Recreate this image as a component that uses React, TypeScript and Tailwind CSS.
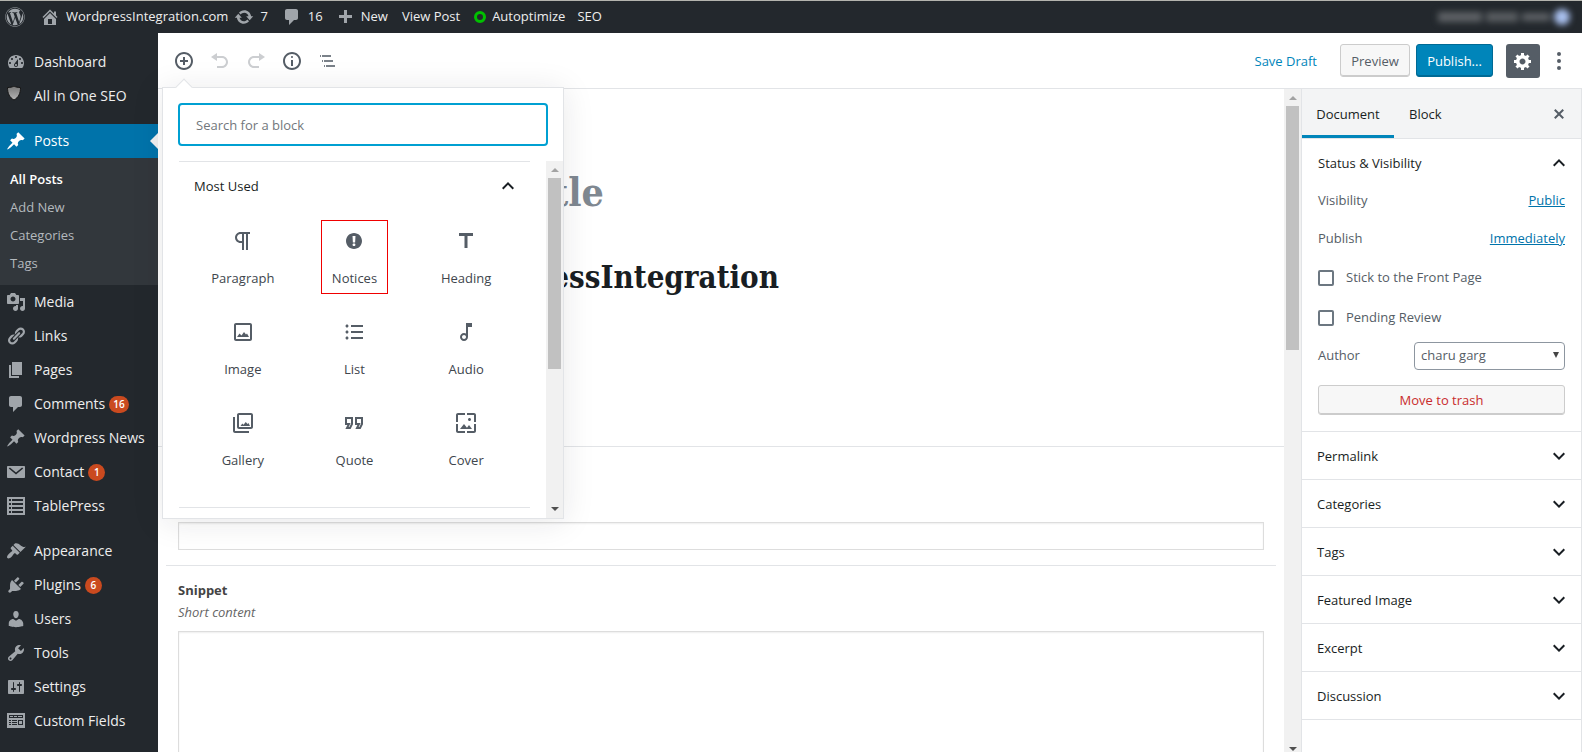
import React from 'react';
import { FaWordpress } from 'react-icons/fa';

interface IconProps {
  d: string;
  size?: 20 | 24;
  className?: string;
}

const Icon: React.FC<IconProps> = ({ d, size = 20, className = '' }) => (
  <svg
    width={size}
    height={size}
    viewBox={size === 24 ? '0 0 24 24' : '0 0 20 20'}
    fill="currentColor"
    fillRule="evenodd"
    aria-hidden="true"
    className={`shrink-0 ${className}`}
  >
    <path d={d} />
  </svg>
);

const icons = {
  dashboard:
    'M3.76 16h12.48c1.1-1.37 1.76-3.11 1.76-5 0-4.42-3.58-8-8-8s-8 3.58-8 8c0 1.89.66 3.63 1.76 5zM10 4c.55 0 1 .45 1 1s-.45 1-1 1-1-.45-1-1 .45-1 1-1zM6 6c.55 0 1 .45 1 1s-.45 1-1 1-1-.45-1-1 .45-1 1-1zm8 0c.55 0 1 .45 1 1s-.45 1-1 1-1-.45-1-1 .45-1 1-1zm-5.37 5.55L12 7v6c0 1.1-.9 2-2 2s-2-.9-2-2c0-.57.24-1.08.63-1.45zM4 10c.55 0 1 .45 1 1s-.45 1-1 1-1-.45-1-1 .45-1 1-1zm12 0c.55 0 1 .45 1 1s-.45 1-1 1-1-.45-1-1 .45-1 1-1zm-5 3c0-.55-.45-1-1-1s-1 .45-1 1 .45 1 1 1 1-.45 1-1z',
  post: 'M10.44 3.02l1.82-1.82 6.36 6.35-1.83 1.82c-1.05-.68-2.48-.57-3.41.36l-.75.75c-.92.93-1.04 2.35-.35 3.41l-1.83 1.82-2.41-2.41-2.8 2.79c-.42.42-3.38 2.71-3.8 2.29s1.86-3.39 2.28-3.81l2.79-2.79L4.1 9.36l1.83-1.82c1.05.69 2.48.57 3.4-.36l.75-.75c.93-.92 1.05-2.35.36-3.41z',
  media:
    'M13 11V4c0-.55-.45-1-1-1h-1.67L9 1H5L3.67 3H2c-.55 0-1 .45-1 1v7c0 .55.45 1 1 1h10c.55 0 1-.45 1-1zM7 4.5c1.38 0 2.5 1.12 2.5 2.5S8.38 9.5 7 9.5 4.5 8.38 4.5 7 5.62 4.5 7 4.5zM14 6h5v10.5c0 1.38-1.12 2.5-2.5 2.5S14 17.88 14 16.5s1.12-2.5 2.5-2.5c.17 0 .34.02.5.05V9h-3V6zm-4 8.05V13h2v3.5c0 1.38-1.12 2.5-2.5 2.5S7 17.88 7 16.5 8.12 14 9.5 14c.17 0 .34.02.5.05z',
  links:
    'M17.74 2.76c1.68 1.69 1.68 4.41 0 6.1l-1.53 1.52c-1.12 1.12-2.7 1.47-4.14 1.09l2.62-2.61.76-.77.76-.76c.84-.84.84-2.2 0-3.04-.84-.85-2.2-.85-3.04 0l-.77.76-3.38 3.38c-.37-1.44-.02-3.02 1.1-4.14l1.52-1.53c1.69-1.68 4.42-1.68 6.1 0zM8.59 13.43l5.34-5.34c.42-.42.42-1.1 0-1.52-.44-.43-1.13-.39-1.53 0l-5.33 5.34c-.42.42-.42 1.1 0 1.52.44.43 1.13.39 1.52 0zm-.76 2.29l4.14-4.15c.38 1.44.03 3.02-1.09 4.14l-1.52 1.53c-1.69 1.68-4.41 1.68-6.1 0-1.68-1.68-1.68-4.42 0-6.1l1.53-1.52c1.12-1.12 2.7-1.47 4.14-1.1l-4.14 4.15c-.85.84-.85 2.2 0 3.05.84.84 2.2.84 3.04 0z',
  page: 'M6 15V2h10v13H6zm-1 1h8v2H3V5h2v11z',
  comments:
    'M5 2h9c1.1 0 2 .9 2 2v7c0 1.1-.9 2-2 2h-2l-5 5v-5H5c-1.1 0-2-.9-2-2V4c0-1.1.9-2 2-2z',
  mail: 'M2 4h16c.55 0 1 .45 1 1v10c0 .55-.45 1-1 1H2c-.55 0-1-.45-1-1V5c0-.55.45-1 1-1zm1.9 1.4L2.8 6.6l7.2 6 7.2-6-1.1-1.2L10 10.6z',
  table:
    'M1 1h18v18H1V1zm2 2v2h2V3H3zm3 0v2h11V3H6zM3 7v2h2V7H3zm3 0v2h11V7H6zm-3 4v2h2v-2H3zm3 0v2h11v-2H6zm-3 4v2h2v-2H3zm3 0v2h11v-2H6z',
  appearance:
    'M14.48 11.06L7.41 3.99l1.5-1.5c.5-.56 2.3-.47 3.51.32 1.21.8 1.43 1.28 2.91 2.1 1.18.64 2.45 1.26 4.45.85zm-.71.71L6.7 4.7 4.93 6.47c-.39.39-.39 1.02 0 1.41l1.06 1.06c.39.39.39 1.03 0 1.42-.6.6-1.43 1.11-2.21 1.69-.35.26-.7.53-1.01.84C1.43 14.23.4 16.08 1.4 17.07c.99 1 2.84-.03 4.18-1.36.31-.31.58-.66.85-1.02.57-.78 1.08-1.61 1.69-2.21.39-.39 1.02-.39 1.41 0l1.06 1.06c.39.39 1.02.39 1.41 0z',
  plugins:
    'M13.11 4.36L9.87 7.6 8 5.73l3.24-3.24c.35-.34 1.05-.2 1.56.32.52.51.66 1.21.31 1.55zm-8 1.77l.91-1.12 9.01 9.01-1.19.84c-.71.71-2.63 1.16-3.82 1.16H6.14L4.9 17.26c-.59.59-1.54.59-2.12 0-.59-.58-.59-1.53 0-2.12l1.24-1.24v-3.88c0-1.13.4-3.19 1.09-3.89zm7.26 3.97l3.24-3.24c.34-.35 1.04-.21 1.55.31.52.51.66 1.21.31 1.55l-3.24 3.25z',
  users:
    'M10 9.25c-2.27 0-2.73-3.44-2.73-3.44C7 4.02 7.82 2 9.97 2c2.16 0 2.98 2.02 2.71 3.81 0 0-.41 3.44-2.68 3.44zm0 2.57L12.72 10c2.39 0 4.52 2.33 4.52 4.53v2.49s-3.65 1.13-7.24 1.13c-3.65 0-7.24-1.13-7.24-1.13v-2.49c0-2.25 1.94-4.48 4.47-4.48z',
  tools:
    'M16.68 9.77c-1.34 1.34-3.3 1.67-4.95.99l-5.41 6.52c-.99.99-2.59.99-3.58 0s-.99-2.59 0-3.57l6.52-5.42c-.68-1.65-.35-3.61.99-4.95 1.28-1.28 3.12-1.62 4.72-1.06l-2.89 2.89 2.82 2.82 2.86-2.87c.53 1.58.18 3.39-1.08 4.65zM3.81 16.21c.4.39 1.04.39 1.43 0 .4-.4.4-1.04 0-1.43-.39-.4-1.03-.4-1.43 0-.39.39-.39 1.03 0 1.43z',
  settings:
    'M18 16V4c0-.55-.45-1-1-1H3c-.55 0-1 .45-1 1v12c0 .55.45 1 1 1h14c.55 0 1-.45 1-1zM8 11h1c.55 0 1 .45 1 1s-.45 1-1 1H8v1.5c0 .28-.22.5-.5.5s-.5-.22-.5-.5V13H6c-.55 0-1-.45-1-1s.45-1 1-1h1V5.5c0-.28.22-.5.5-.5s.5.22.5.5V11zm5-2h-1c-.55 0-1-.45-1-1s.45-1 1-1h1V5.5c0-.28.22-.5.5-.5s.5.22.5.5V7h1c.55 0 1 .45 1 1s-.45 1-1 1h-1v5.5c0 .28-.22.5-.5.5s-.5-.22-.5-.5V9z',
  fields:
    'M1 2h18v15H1V2zm2 2v3h14V4H3zm1 1h3v1H4V5zm4 0h3v1H8V5zm4 0h4v1h-4V5zM3 9v1h2V9H3zm3 0v1h5V9H6zm-3 2v1h2v-1H3zm3 0v1h5v-1H6zm-3 2v1h2v-1H3zm3 0v1h5v-1H6zm6-4v5h5V9h-5zm1 1h3v3h-3v-3z',
  home: 'M16 8.5l1.53 1.53-1.06 1.06L10 4.6l-6.47 6.49-1.06-1.06L10 2.5l4 4v-2h2v4zm-6-2.46l6 5.99V18H4v-5.97zM12 17v-5H8v5h4z',
  update:
    'M10.2 3.28c3.53 0 6.43 2.61 6.92 6h2.08l-3.5 4-3.5-4h2.32c-.45-1.97-2.21-3.45-4.32-3.45-1.45 0-2.73.71-3.54 1.78L4.95 5.66C6.23 4.2 8.11 3.28 10.2 3.28zm-.4 13.44c-3.52 0-6.43-2.61-6.92-6H.8l3.5-4c1.17 1.33 2.33 2.67 3.5 4H5.48c.45 1.97 2.21 3.45 4.32 3.45 1.45 0 2.73-.71 3.54-1.78l1.71 1.95c-1.28 1.46-3.15 2.38-5.25 2.38z',
  plus: 'M17 8v3h-5v5H9v-5H4V8h5V3h3v5h5z',
  insert:
    'M10 1c-5 0-9 4-9 9s4 9 9 9 9-4 9-9-4-9-9-9zm0 16c-3.9 0-7-3.1-7-7s3.1-7 7-7 7 3.1 7 7-3.1 7-7 7zm1-11H9v3H6v2h3v3h2v-3h3V9h-3V6z',
  undo: 'M12 5H7V2L1 6l6 4V7h5c2.2 0 4 1.8 4 4s-1.8 4-4 4H7v2h5c3.3 0 6-2.7 6-6s-2.7-6-6-6z',
  redo: 'M8 5h5V2l6 4-6 4V7H8c-2.2 0-4 1.8-4 4s1.8 4 4 4h5v2H8c-3.3 0-6-2.7-6-6s2.7-6 6-6z',
  info: 'M9 15h2V9H9v6zm1-10c-.5 0-1 .5-1 1s.5 1 1 1 1-.5 1-1-.5-1-1-1zm0-4c-5 0-9 4-9 9s4 9 9 9 9-4 9-9-4-9-9-9zm0 16c-3.9 0-7-3.1-7-7s3.1-7 7-7 7 3.1 7 7-3.1 7-7 7z',
  outline:
    'M2 4h1v2H2V4zm2 0h9v2H4V4zm0 5h1v2H4V9zm2 0h9v2H6V9zm0 5h1v2H6v-2zm2 0h9v2H8v-2z',
  gear: 'M18 12h-2.18c-.17.7-.44 1.35-.81 1.93l1.54 1.54-2.1 2.1-1.54-1.54c-.58.36-1.23.63-1.91.79V19H8v-2.18c-.68-.16-1.33-.43-1.91-.79l-1.54 1.54-2.12-2.12 1.54-1.54c-.36-.58-.63-1.23-.79-1.91H1V9.03h2.17c.16-.7.44-1.35.8-1.94L2.43 5.55l2.1-2.1 1.54 1.54c.58-.37 1.24-.64 1.93-.81V2h3v2.18c.68.16 1.33.43 1.91.79l1.54-1.54 2.12 2.12-1.54 1.54c.36.59.64 1.24.8 1.94H18V12zm-8.5 1.5c1.66 0 3-1.34 3-3s-1.34-3-3-3-3 1.34-3 3 1.34 3 3 3z',
  more: 'M10 1a2 2 0 110 4 2 2 0 010-4zm0 7a2 2 0 110 4 2 2 0 010-4zm0 7a2 2 0 110 4 2 2 0 010-4z',
  close:
    'M14.95 6.46L11.41 10l3.54 3.54-1.41 1.41L10 11.42l-3.53 3.53-1.42-1.42L8.58 10 5.05 6.47l1.42-1.42L10 8.58l3.54-3.53z',
  up: 'M12 8l-6 6 1.41 1.41L12 10.83l4.59 4.58L18 14z',
  down: 'M7.41 8.59L12 13.17l4.59-4.58L18 10l-6 6-6-6z',
};

const blocks: { label: string; d: string; size: 20 | 24; marked?: boolean }[] = [
  { label: 'Paragraph', size: 24, d: 'M11 5v7H9.5C7.6 12 6 10.4 6 8.5S7.6 5 9.5 5H11m8-2H9.5C6.5 3 4 5.5 4 8.5S6.5 14 9.5 14H11v7h2V5h2v16h2V5h2V3z' },
  { label: 'Notices', size: 20, marked: true, d: 'M10 2c4.42 0 8 3.58 8 8s-3.58 8-8 8-8-3.58-8-8 3.58-8 8-8zm1.13 9.38l.35-6.46H8.52l.35 6.46h2.26zm-.09 3.36c.24-.23.37-.55.37-.96 0-.42-.12-.74-.36-.97s-.59-.35-1.06-.35-.82.12-1.07.35-.37.55-.37.97c0 .41.13.73.38.96.26.23.61.34 1.06.34s.8-.11 1.05-.34z' },
  { label: 'Heading', size: 24, d: 'M5 4v3h5.5v12h3V7H19V4z' },
  { label: 'Image', size: 24, d: 'M19 5v14H5V5h14m0-2H5c-1.1 0-2 .9-2 2v14c0 1.1.9 2 2 2h14c1.1 0 2-.9 2-2V5c0-1.1-.9-2-2-2zM6 17l2.5-3.5 2 2 2.5-3.5 2 2.5 1-1 2 3.5z' },
  { label: 'List', size: 24, d: 'M9 19h12v-2H9v2zm0-6h12v-2H9v2zm0-8v2h12V5H9zm-4-.5c-.83 0-1.5.67-1.5 1.5S4.17 7.5 5 7.5 6.5 6.83 6.5 6 5.83 4.5 5 4.5zm0 6c-.83 0-1.5.67-1.5 1.5s.67 1.5 1.5 1.5 1.5-.67 1.5-1.5-.67-1.5-1.5-1.5zm0 6c-.83 0-1.5.67-1.5 1.5s.67 1.5 1.5 1.5 1.5-.67 1.5-1.5-.67-1.5-1.5-1.5z' },
  { label: 'Audio', size: 24, d: 'M12 3l.01 10.55c-.59-.34-1.27-.55-2-.55C7.79 13 6 14.79 6 17s1.79 4 4.01 4S14 19.21 14 17V7h4V3h-6zm-1.99 16c-1.1 0-2-.9-2-2s.9-2 2-2 2 .9 2 2-.9 2-2 2z' },
  { label: 'Gallery', size: 24, d: 'M20 4v12H8V4h12m0-2H8C6.9 2 6 2.9 6 4v12c0 1.1.9 2 2 2h12c1.1 0 2-.9 2-2V4c0-1.1-.9-2-2-2zM9.5 15l1.8-2.5 1.2 1.2 2.3-2.7 1.7 2 1-1 1.5 3zM2 6v14c0 1.1.9 2 2 2h14v-2H4V6H2z' },
  { label: 'Quote', size: 24, d: 'M18.62 18h-5.24l2-4H13V6h8v7.24L18.62 18zm-2-2h.76L19 12.76V8h-4v4h3.62l-2 4zm-8 2H3.38l2-4H3V6h8v7.24L8.62 18zm-2-2h.76L9 12.76V8H5v4h3.62l-2 4z' },
  { label: 'Cover', size: 24, d: 'M4 4h7V2H4c-1.1 0-2 .9-2 2v7h2V4zm6 9l-4 5h12l-3-4-2.03 2.71L10 13zm7-4.5c0-.83-.67-1.5-1.5-1.5S14 7.67 14 8.5s.67 1.5 1.5 1.5S17 9.33 17 8.5zM20 2h-7v2h7v7h2V4c0-1.1-.9-2-2-2zm0 18h-7v2h7c1.1 0 2-.9 2-2v-7h-2v7zM4 13H2v7c0 1.1.9 2 2 2h7v-2H4v-7z' },
];

interface MenuItemProps {
  label: string;
  d?: string;
  count?: number;
  active?: boolean;
}

const MenuItem: React.FC<MenuItemProps> = ({ label, d, count, active }) => (
  <a
    href="#"
    className={`relative flex h-[34px] items-center pl-1.5 text-sm ${active ? 'bg-[#0073aa] text-white' : 'text-[#eee]'}`}
  >
    {d ? (
      <Icon d={d} className={active ? 'text-white' : 'text-[#a0a5aa]'} />
    ) : (
      <svg width="20" height="20" viewBox="0 0 20 20" aria-hidden="true" className="shrink-0">
        <defs>
          <linearGradient id="shield" x1="0" y1="0" x2="0" y2="1">
            <stop offset="0" stopColor="#777" />
            <stop offset="1" stopColor="#b5b5b5" />
          </linearGradient>
        </defs>
        <path d="M8 0c2 1.200 4 1.500 6.500 1.500 0 6-2 10-6.500 12.500C3.500 11.500 1.500 7.500 1.500 1.500 4 1.500 6 1.200 8 0z" fill="url(#shield)" stroke="#151515" />
      </svg>
    )}
    <span className="ml-2 whitespace-nowrap">{label}</span>
    {count !== undefined && (
      <span className="ml-1 flex h-[17px] min-w-[17px] items-center justify-center rounded-full bg-[#ca4a1f] px-1 text-[10px] font-semibold text-white">
        {count}
      </span>
    )}
    {active && (
      <span className="absolute right-0 border-y-8 border-r-8 border-y-transparent border-r-[#f1f1f1]" />
    )}
  </a>
);

const AdminMenu = () => (
  <nav aria-label="Admin menu" className="w-[158px] shrink-0 overflow-hidden bg-[#23282d] pt-3">
    <MenuItem label="Dashboard" d={icons.dashboard} />
    <MenuItem label="All in One SEO" />
    <div className="mt-[11px]">
      <MenuItem label="Posts" d={icons.post} active />
      <ul className="bg-[#32373c] pt-[7px] pb-2 text-[13px] leading-7 text-[#b4b9be]">
        <li><a href="#" className="block pl-2.5 font-semibold text-white">All Posts</a></li>
        <li><a href="#" className="block pl-2.5">Add New</a></li>
        <li><a href="#" className="block pl-2.5">Categories</a></li>
        <li><a href="#" className="block pl-2.5">Tags</a></li>
      </ul>
    </div>
    <MenuItem label="Media" d={icons.media} />
    <MenuItem label="Links" d={icons.links} />
    <MenuItem label="Pages" d={icons.page} />
    <MenuItem label="Comments" d={icons.comments} count={16} />
    <MenuItem label="Wordpress News" d={icons.post} />
    <MenuItem label="Contact" d={icons.mail} count={1} />
    <MenuItem label="TablePress" d={icons.table} />
    <div className="mt-[11px]">
      <MenuItem label="Appearance" d={icons.appearance} />
      <MenuItem label="Plugins" d={icons.plugins} count={6} />
      <MenuItem label="Users" d={icons.users} />
      <MenuItem label="Tools" d={icons.tools} />
      <MenuItem label="Settings" d={icons.settings} />
      <MenuItem label="Custom Fields" d={icons.fields} />
    </div>
  </nav>
);

const AdminBar = () => (
  <header className="flex h-[33px] shrink-0 items-center border-t border-[#b4b4ae] bg-[#23282d] pr-3 pl-[5px] text-[13px] whitespace-nowrap text-[#eee]">
    <a href="#" aria-label="WordPress"><FaWordpress size={20} className="text-[#a0a5aa]" /></a>
    <a href="#" className="ml-[15px] flex items-center gap-1.5">
      <Icon d={icons.home} className="text-[#a0a5aa]" />WordpressIntegration.com
    </a>
    <a href="#" className="ml-1.5 flex items-center gap-1.5">
      <Icon d={icons.update} className="text-[#a0a5aa]" />7
    </a>
    <a href="#" className="ml-3.5 flex items-center gap-1.5">
      <Icon d={icons.comments} className="text-[#a0a5aa]" />16
    </a>
    <a href="#" className="ml-3 flex items-center gap-1.5">
      <Icon d={icons.plus} className="text-[#a0a5aa]" />New
    </a>
    <a href="#" className="ml-3.5">View Post</a>
    <a href="#" className="ml-3.5 flex items-center gap-1.5">
      <span className="size-3 rounded-full border-[3px] border-[#00c000]" />Autoptimize
    </a>
    <a href="#" className="ml-3">SEO</a>
    <div className="ml-auto flex items-center gap-1 blur-[3px]" aria-hidden="true">
      <span className="h-2.5 w-11 bg-[#5d6165]" />
      <span className="h-2.5 w-8 bg-[#585c60]" />
      <span className="h-2 w-7 bg-[#5d6165]" />
      <span className="size-4 rounded-full bg-[#a9c0ee]" />
    </div>
  </header>
);

interface ScrollBarProps {
  thumb: string;
  end: string;
}

const ScrollBar: React.FC<ScrollBarProps> = ({ thumb, end }) => (
  <div className="flex w-[17px] shrink-0 flex-col items-center bg-[#f1f1f1]" aria-hidden="true">
    <span className="mt-[7px] mb-[6px] border-x-4 border-b-4 border-x-transparent border-b-[#a3a3a3]" />
    <span className={`w-[13px] bg-[#c1c1c1] ${thumb}`} />
    <span className={`mt-auto border-x-4 border-t-4 border-x-transparent border-t-[#505050] ${end}`} />
  </div>
);

const BlockInserter = () => (
  <div className="absolute top-[54px] left-1 z-10 flex h-[432px] w-[402px] flex-col border border-[#e2e4e7] bg-white shadow-[0_3px_30px_rgba(25,30,35,0.1)]">
    <span className="absolute -top-[7px] left-[15px] size-3 rotate-45 border-t border-l border-[#e2e4e7] bg-white" />
    <div className="p-[15px]">
      <input
        type="text"
        aria-label="Search for a block"
        placeholder="Search for a block"
        className="h-[43px] w-full rounded border-2 border-[#00a0d2] px-4 text-[13px] outline-none placeholder:text-[#72777c]"
      />
    </div>
    <div className="flex min-h-0 flex-1">
      <div className="min-w-0 flex-1 overflow-hidden pr-4 pl-4">
        <section className="border-y border-[#e2e4e7] pb-[31px]">
          <button type="button" className="flex h-12 w-full items-center justify-between pr-2.5 pl-[15px] text-[13px] text-[#191e23]">
            <span className="pt-0.5">Most Used</span>
            <Icon d={icons.up} size={24} />
          </button>
          <div className="grid grid-cols-3 gap-y-[17px] px-2 pt-2.5">
            {blocks.map((block) => (
              <button
                key={block.label}
                type="button"
                className={`flex h-[74px] flex-col items-center justify-self-center border px-2.5 pt-2 text-[13px] leading-[18px] text-[#40464d] ${block.marked ? 'border-[#f00000]' : 'border-transparent'}`}
              >
                <span className="mb-4 flex size-6 items-center justify-center text-[#555d66]">
                  <Icon d={block.d} size={block.size} />
                </span>
                {block.label}
              </button>
            ))}
          </div>
        </section>
      </div>
      <ScrollBar thumb="h-[191px]" end="mb-[7px]" />
    </div>
  </div>
);

const Toolbar = () => (
  <div className="flex h-14 shrink-0 items-center border-b border-[#e2e4e7] bg-white pr-[13px] text-[13px]">
    <div className="flex items-center gap-4 pl-4 text-[#555d66]">
      <button type="button" aria-label="Add block"><Icon d={icons.insert} /></button>
      <button type="button" aria-label="Undo" className="text-[#ccced1]"><Icon d={icons.undo} /></button>
      <button type="button" aria-label="Redo" className="text-[#ccced1]"><Icon d={icons.redo} /></button>
      <button type="button" aria-label="Content structure"><Icon d={icons.info} /></button>
      <button type="button" aria-label="Block navigation" className="text-[#7a8189]"><Icon d={icons.outline} /></button>
    </div>
    <div className="ml-auto flex items-center">
      <button type="button" className="mr-[23px] pt-0.5 text-[#0085ba]">Save Draft</button>
      <button type="button" className="mr-1.5 h-[33px] w-[70px] rounded-[3px] border border-[#ccc] bg-[#f7f7f7] pt-0.5 text-[#555d66] shadow-[inset_0_-1px_0_#ccc]">
        Preview
      </button>
      <button type="button" className="mr-[13px] h-[33px] w-[77px] rounded-[3px] border border-[#006a95] bg-[#0085ba] pt-0.5 font-medium text-white shadow-[inset_0_-1px_0_#006a95]">
        Publish...
      </button>
      <button type="button" aria-label="Settings" className="mr-[9px] flex size-[34px] items-center justify-center rounded-[3px] bg-[#555d66] text-white">
        <Icon d={icons.gear} />
      </button>
      <button type="button" aria-label="More tools" className="text-[#555d66]"><Icon d={icons.more} /></button>
    </div>
  </div>
);

const EditorContent = () => (
  <main className="flex min-w-0 flex-1 flex-col overflow-hidden bg-white">
    <div className="h-[358px] shrink-0 border-b border-[#e2e4e7] pt-[76px]">
      <div className="mx-auto w-[574px] font-['DejaVu_Serif_Condensed','DejaVu_Serif',serif] font-bold">
        <h1 className="text-[39px] leading-[54px] text-[#7f8891]">Add title</h1>
        <h2 className="mt-9 text-[31px] leading-[44px] text-[#191e23]">WordPressIntegration</h2>
      </div>
    </div>
    <div className="px-2">
      <div className="border-b border-[#e2e4e7] px-3 pt-[75px] pb-[15px]">
        <input type="text" aria-label="Custom field" className="block h-7 w-full border border-[#ddd] px-2 text-[13px] shadow-[inset_0_1px_2px_rgba(0,0,0,0.07)] outline-none" />
      </div>
      <div className="px-3 pt-[15px] text-[13px] leading-[18px]">
        <label htmlFor="snippet" className="block font-bold text-[#444]">Snippet</label>
        <p className="mt-1 mb-2.5 text-[#666] italic">Short content</p>
        <textarea id="snippet" className="block h-[200px] w-full resize-none border border-[#ddd] p-2 shadow-[inset_0_1px_2px_rgba(0,0,0,0.07)] outline-none" />
      </div>
    </div>
  </main>
);

const DocumentSettings = () => (
  <aside className="w-[281px] shrink-0 overflow-hidden border-x border-[#e2e4e7] bg-white text-[13px] text-[#191e23]">
    <div className="flex h-[50px] items-stretch border-b border-[#e2e4e7] bg-[#f3f4f5] pr-3">
      <button type="button" className="w-[92px] border-b-3 border-[#0085ba] pt-[5px]">Document</button>
      <button type="button" className="px-[15px] pt-0.5">Block</button>
      <button type="button" aria-label="Close settings" className="ml-auto text-[#555d66]"><Icon d={icons.close} /></button>
    </div>
    <section className="border-b border-[#e2e4e7] px-4 pb-4 text-[#555d66]">
      <button type="button" className="-mr-2 flex h-12 w-[calc(100%+6px)] items-center justify-between text-[#191e23]">
        <span className="pt-0.5">Status &amp; Visibility</span>
        <Icon d={icons.up} size={24} />
      </button>
      <div className="flex h-[27px] items-center justify-between">
        <span>Visibility</span>
        <a href="#" className="text-[#0073aa] underline">Public</a>
      </div>
      <div className="mt-[11px] flex h-[27px] items-center justify-between">
        <span>Publish</span>
        <a href="#" className="text-[#0073aa] underline">Immediately</a>
      </div>
      <label className="mt-3 flex h-[27px] items-center gap-3">
        <input type="checkbox" className="size-4 appearance-none rounded-[2px] border-2 border-[#6c7781]" />
        Stick to the Front Page
      </label>
      <label className="mt-[13px] flex h-[27px] items-center gap-3">
        <input type="checkbox" className="size-4 appearance-none rounded-[2px] border-2 border-[#6c7781]" />
        Pending Review
      </label>
      <div className="mt-[11px] flex items-center justify-between">
        <label htmlFor="author">Author</label>
        <div className="relative">
          <select id="author" className="h-7 w-[151px] appearance-none rounded border border-[#8d96a0] bg-white pl-1.5">
            <option>charu garg</option>
          </select>
          <span className="pointer-events-none absolute top-[10px] right-1.5 border-x-[3px] border-t-[6px] border-x-transparent border-t-[#444]" />
        </div>
      </div>
      <button type="button" className="mt-[15px] h-[30px] w-full rounded-[3px] border border-[#ccc] bg-[#f7f7f7] pt-0.5 text-[#c92c2c] shadow-[inset_0_-1px_0_#ccc]">
        Move to trash
      </button>
    </section>
    {['Permalink', 'Categories', 'Tags', 'Featured Image', 'Excerpt', 'Discussion'].map((title) => (
      <button
        key={title}
        type="button"
        className="flex h-12 w-full items-center justify-between border-b border-[#e2e4e7] pr-2.5 pl-[15px]"
      >
        <span className="pt-0.5">{title}</span>
        <Icon d={icons.down} size={24} />
      </button>
    ))}
  </aside>
);

const App: React.FC = () => {
  return (
    <div className="flex h-screen flex-col overflow-hidden font-['Open_Sans','Noto_Sans',sans-serif]">
      <AdminBar />
      <div className="flex min-h-0 flex-1">
        <AdminMenu />
        <div className="relative flex min-w-0 flex-1 flex-col">
          <Toolbar />
          <BlockInserter />
          <div className="flex min-h-0 flex-1">
            <EditorContent />
            <ScrollBar thumb="h-[244px]" end="mb-px" />
            <DocumentSettings />
          </div>
        </div>
      </div>
    </div>
  );
};

export default App;
